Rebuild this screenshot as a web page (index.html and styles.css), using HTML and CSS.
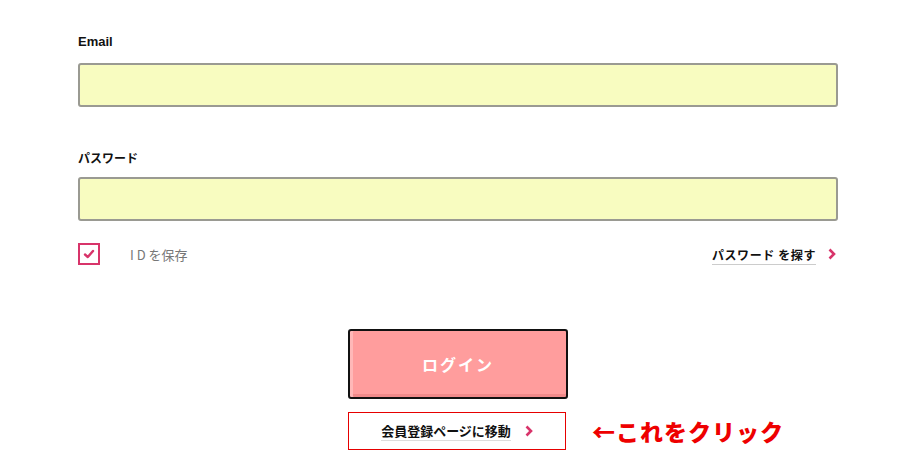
FILE: index.html
```html
<!DOCTYPE html>
<html lang="ja">
<head>
  <meta charset="UTF-8">
  <title>ログイン</title>
  <link rel="stylesheet" href="styles.css">
</head>
<body>
  <div class="login">
    <form class="login-form">
      <label class="field-label" for="email">Email</label>
      <input class="field-input" type="text" id="email">

      <label class="field-label field-label-jp" for="password">パスワード</label>
      <input class="field-input" type="password" id="password">

      <div class="option-row">
        <label class="save-id">
          <span class="check-box">
            <svg width="12" height="10" viewBox="0 0 12 10"><path d="M2 5.5 L4.8 8 L10 2" fill="none" stroke="#d8346a" stroke-width="2.4" stroke-linecap="round" stroke-linejoin="round"/></svg>
          </span>
          <span class="save-text">I D を保存</span>
        </label>
        <a class="find-link" href="#">
          <span class="find-text">パスワード を探す</span>
          <svg class="chevron" width="8" height="12" viewBox="0 0 8 12"><path d="M1.5 1.5 L6 6 L1.5 10.5" fill="none" stroke="#d8346a" stroke-width="2.6"/></svg>
        </a>
      </div>

      <div class="actions">
        <button type="button" class="login-btn">ログイン</button>
        <div class="register-row">
          <a class="register-btn" href="#">
            <span class="register-text">会員登録ページに移動</span>
            <svg class="chevron" width="8" height="12" viewBox="0 0 8 12"><path d="M1.5 1.5 L6 6 L1.5 10.5" fill="none" stroke="#d8346a" stroke-width="2.6"/></svg>
          </a>
          <span class="note">←これをクリック</span>
        </div>
      </div>
    </form>
  </div>
</body>
</html>
```

FILE: styles.css
```css
body {
  margin: 0;
  padding: 0;
  background-color: #fff;
  font-family: "Noto Sans CJK JP", "Noto Sans", sans-serif;
  color: #111;
}

.login {
  width: 760px;
  margin-left: 78px;
  padding-top: 33px;
}

.login-form {
  display: flex;
  flex-direction: column;
}

.field-label {
  font-family: "Liberation Sans", sans-serif;
  font-size: 13px;
  font-weight: bold;
  line-height: 18px;
  margin-bottom: 12px;
}

.field-label-jp {
  font-family: "Noto Sans CJK JP", sans-serif;
  font-size: 12px;
  margin-top: 42px;
  margin-bottom: 10px;
}

.field-input {
  box-sizing: border-box;
  width: 760px;
  height: 44px;
  border: 2px solid #9a9a92;
  border-radius: 3px;
  background-color: #f8fcc0;
  outline: none;
}

.option-row {
  display: flex;
  justify-content: space-between;
  align-items: center;
  margin-top: 22px;
  height: 22px;
}

.save-id {
  display: flex;
  align-items: center;
}

.check-box {
  box-sizing: border-box;
  width: 22px;
  height: 22px;
  border: 2px solid #d8346a;
  display: flex;
  align-items: center;
  justify-content: center;
}

.save-text {
  margin-left: 30px;
  margin-top: 1px;
  font-size: 13px;
  color: #777;
}

.find-link {
  display: flex;
  align-items: center;
  text-decoration: none;
  color: #111;
  margin-right: 2px;
}

.find-text {
  font-size: 12px;
  font-weight: bold;
  letter-spacing: 0.6px;
  border-bottom: 1px solid #ccc;
  padding-bottom: 1px;
  margin-top: 2px;
}

.chevron {
  margin-left: 12px;
}

.actions {
  display: flex;
  flex-direction: column;
  align-items: center;
  margin-top: 64px;
}

.login-btn {
  width: 220px;
  height: 70px;
  border: 2px solid #111;
  border-radius: 3px;
  background-color: #ff9d9d;
  box-shadow: inset 3px 0 0 #ffb8b8, inset 0 -3px 0 #f08a8a;
  color: #fff;
  font-family: "Noto Sans CJK JP", sans-serif;
  font-size: 16px;
  font-weight: bold;
  letter-spacing: 2px;
  cursor: pointer;
}

.register-row {
  position: relative;
  margin-top: 13px;
}

.register-btn {
  box-sizing: border-box;
  width: 218px;
  height: 38px;
  margin-right: 2px;
  border: 1px solid #e60000;
  display: flex;
  align-items: center;
  justify-content: center;
  text-decoration: none;
  color: #111;
}

.register-text {
  font-size: 13px;
  font-weight: bold;
  border-bottom: 1px solid #ddd;
}

.register-btn .chevron {
  margin-left: 14px;
}

.note {
  position: absolute;
  left: 244px;
  top: 2px;
  white-space: nowrap;
  color: #ee0000;
  font-size: 23px;
  font-weight: 900;
  letter-spacing: 1px;
}
```
